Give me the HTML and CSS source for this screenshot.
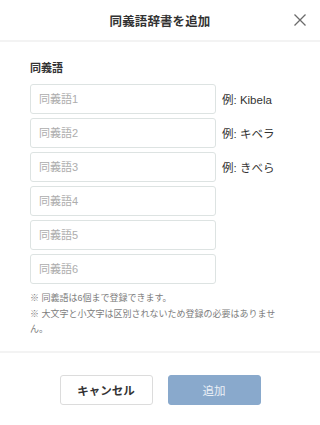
FILE: index.html
```html
<!DOCTYPE html>
<html lang="ja">
<head>
<meta charset="utf-8">
<link rel="stylesheet" href="styles.css">
</head>
<body>
<div class="modal">
  <header class="modal-header">
    <span></span>
    <h1 class="title">同義語辞書を追加</h1>
    <button class="close" aria-label="閉じる">
      <svg width="12" height="12" viewBox="0 0 12 12"><path d="M0.5 0.5 L11.5 11.5 M11.5 0.5 L0.5 11.5" stroke="#6b6b6b" stroke-width="1.3" fill="none"/></svg>
    </button>
  </header>
  <div class="modal-body">
    <div class="label">同義語</div>
    <div class="rows">
      <input class="field" placeholder="同義語1"><span class="example">例: Kibela</span>
      <input class="field" placeholder="同義語2"><span class="example">例: キベラ</span>
      <input class="field" placeholder="同義語3"><span class="example">例: きべら</span>
      <input class="field" placeholder="同義語4"><span></span>
      <input class="field" placeholder="同義語5"><span></span>
      <input class="field" placeholder="同義語6"><span></span>
    </div>
    <div class="notes">
      <p>※ 同義語は6個まで登録できます。</p>
      <p>※ 大文字と小文字は区別されないため登録の必要はありません。</p>
    </div>
  </div>
  <footer class="modal-footer">
    <button class="btn btn-cancel">キャンセル</button>
    <button class="btn btn-add">追加</button>
  </footer>
</div>
</body>
</html>
```
FILE: styles.css
```css
* { box-sizing: border-box; }
body {
  margin: 0;
  background: #fff;
  font-family: "Liberation Sans", "Noto Sans CJK JP", sans-serif;
  color: #333;
}
.modal { width: 320px; }
.modal-header {
  height: 42px;
  display: grid;
  grid-template-columns: 1fr auto 1fr;
  align-items: center;
  border-bottom: 2px solid #f3f3f3;
}
.title {
  margin: 0;
  font-size: 12.5px;
  font-weight: 700;
  color: #333;
  letter-spacing: 0.1px;
}
.close {
  justify-self: end;
  margin-right: 14px;
  border: 0;
  background: none;
  padding: 0;
  width: 12px;
  height: 12px;
  display: flex;
}
.modal-body {
  padding: 18px 30px 13px;
}
.label {
  font-size: 11px;
  font-weight: 700;
  line-height: 16px;
  margin-bottom: 8px;
  color: #333;
}
.rows {
  display: grid;
  grid-template-columns: 186px auto;
  column-gap: 6px;
  row-gap: 4px;
  align-items: center;
}
.field {
  height: 30px;
  width: 186px;
  border: 1px solid #dde3e2;
  border-radius: 3px;
  padding: 0 8px;
  font-family: inherit;
  font-size: 11px;
  color: #333;
  outline: none;
}
.field::placeholder { color: #adadad; }
.example {
  font-size: 11.5px;
  color: #333;
}
.notes {
  margin-top: 7px;
  max-width: 252px;
  font-size: 9px;
  line-height: 15.5px;
  color: #7d7d7d;
}
.notes p { margin: 0; }
.modal-footer {
  border-top: 2px solid #f3f3f3;
  padding: 22px 0 21px;
  display: flex;
  justify-content: center;
  gap: 15px;
}
.btn {
  width: 93px;
  height: 30px;
  border-radius: 3px;
  font-family: inherit;
  font-size: 11.5px;
  font-weight: 700;
}
.btn-cancel {
  background: #fff;
  border: 1px solid #dcdcdc;
  color: #333;
}
.btn-add {
  background: #89a9cc;
  border: 1px solid #89a9cc;
  color: #e9eff6;
  font-weight: 400;
}
```
